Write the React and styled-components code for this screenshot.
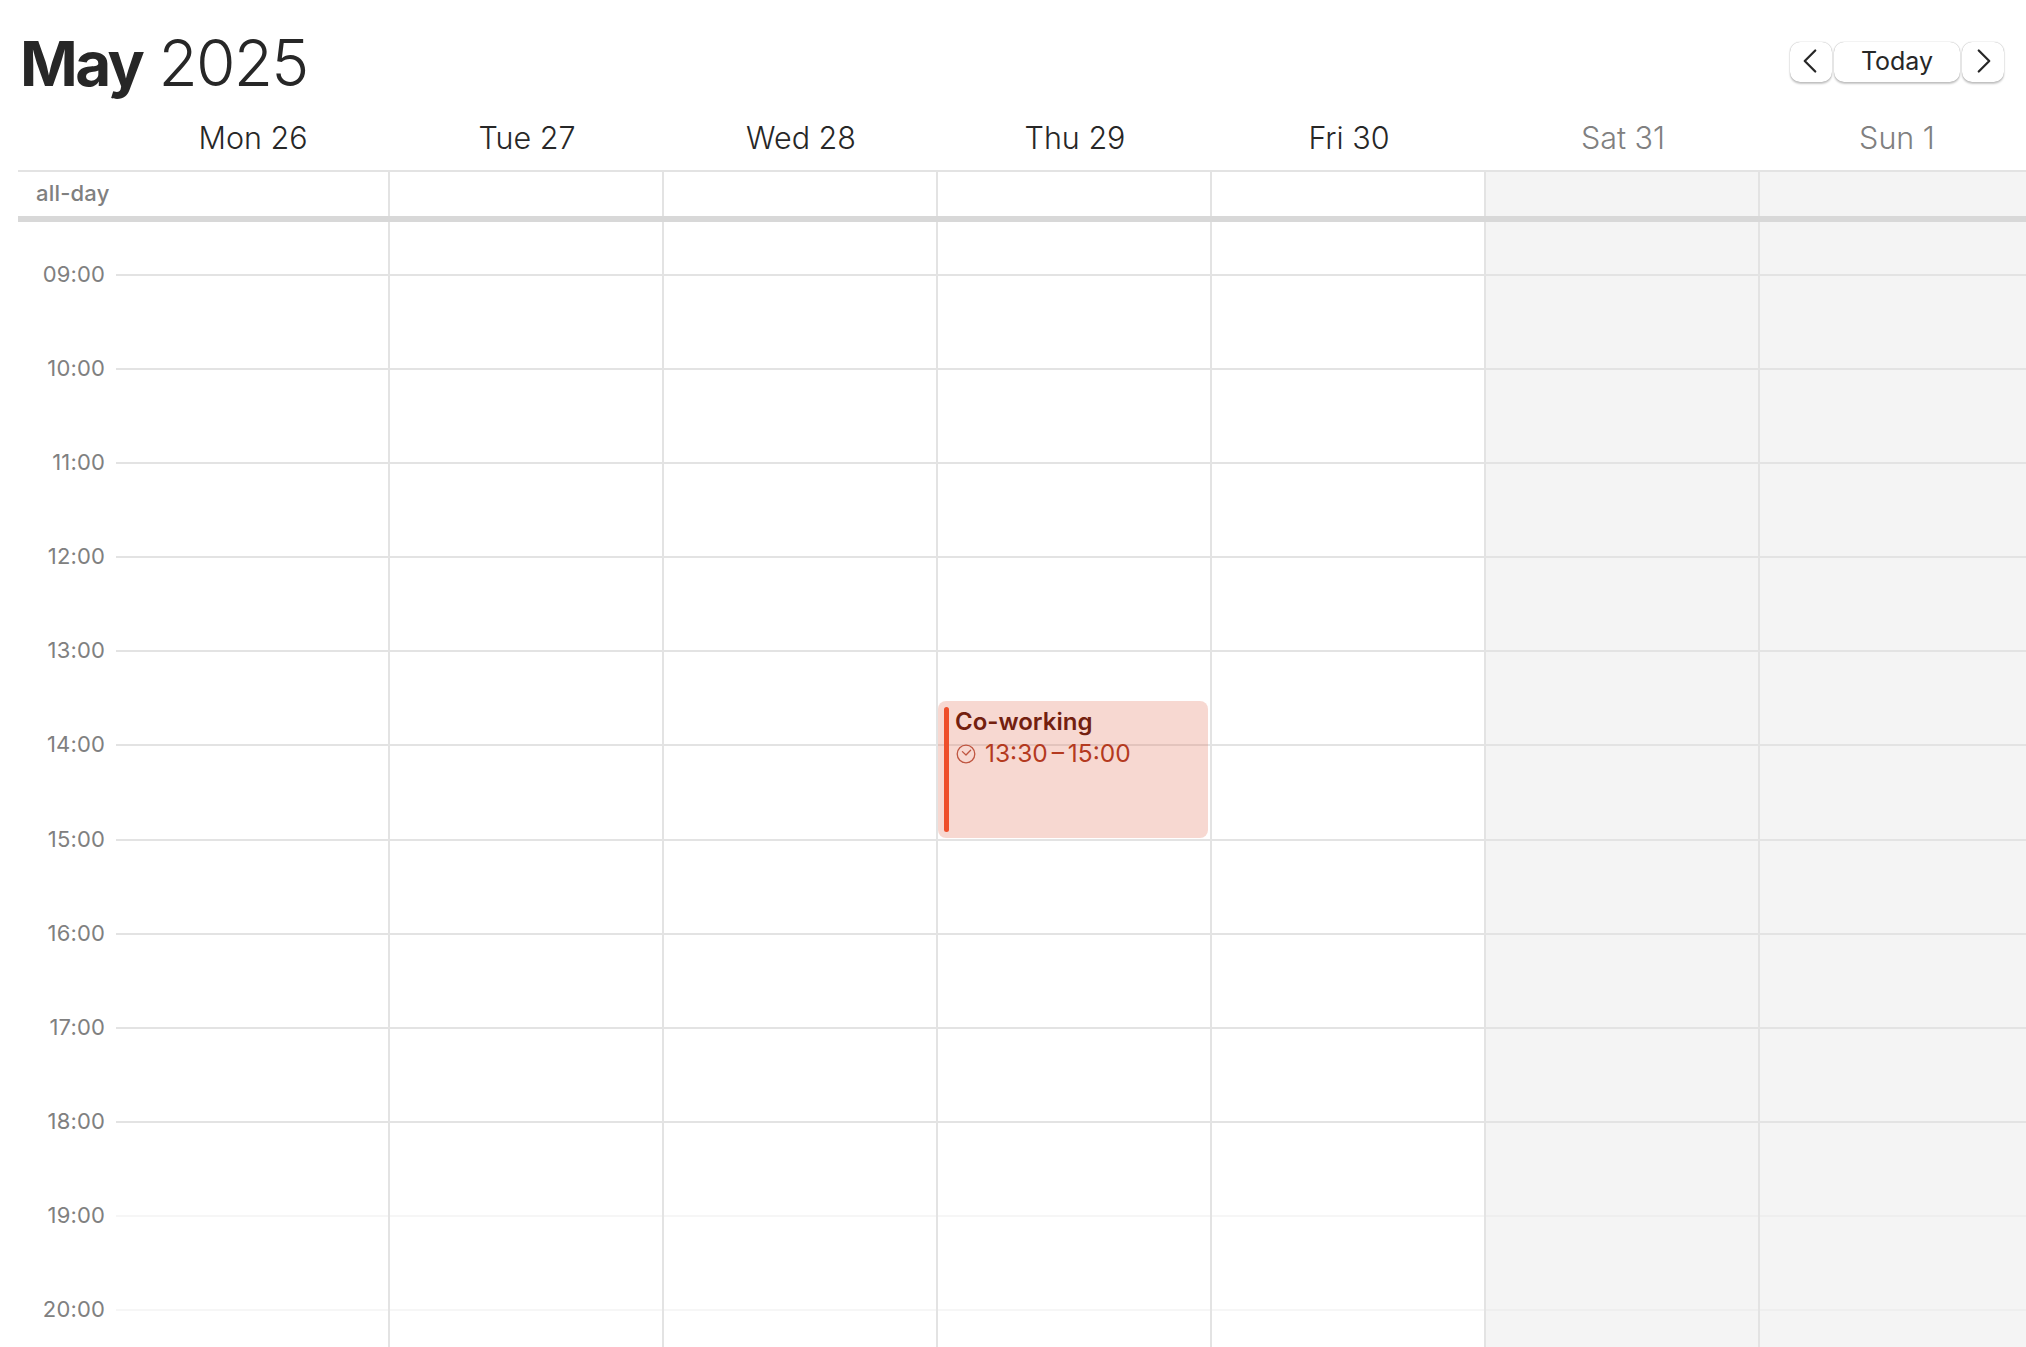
import React from 'react';
import styled, { createGlobalStyle } from 'styled-components';
import { ChevronLeft, ChevronRight } from 'lucide-react';

const DAYS = [
  { label: 'Mon 26' },
  { label: 'Tue 27' },
  { label: 'Wed 28' },
  { label: 'Thu 29', event: true },
  { label: 'Fri 30' },
  { label: 'Sat 31', weekend: true },
  { label: 'Sun 1', weekend: true },
];

const HOURS = ['09:00', '10:00', '11:00', '12:00', '13:00', '14:00', '15:00', '16:00', '17:00', '18:00', '19:00', '20:00'];

const HOUR_HEIGHT = 94.1;
const LEAD_HEIGHT = 52;
const GUTTER = 98;
const COL = 274;

const GlobalStyle = createGlobalStyle`
  html, body {
    margin: 0;
    padding: 0;
    background: #fff;
    overflow: hidden;
  }
  body {
    font-family: Inter, "Liberation Sans", sans-serif;
    color: #272727;
  }
`;

const Page = styled.div`
  width: 2026px;
  height: 1347px;
  overflow: hidden;
  padding-left: 18px;
  box-sizing: border-box;
`;

const Toolbar = styled.header`
  display: flex;
  align-items: flex-start;
  justify-content: space-between;
  height: 110px;
  padding: 24px 22px 0 2px;
  box-sizing: border-box;
`;

const Title = styled.h1`
  margin: 0;
  font-size: 64px;
  line-height: 78px;
  font-weight: 300;
  letter-spacing: -1.8px;
  b {
    font-size: 62px;
    font-weight: 700;
    letter-spacing: -2.6px;
  }
`;

const Nav = styled.div`
  display: flex;
  gap: 2px;
  margin-top: 18px;
`;

const NavButton = styled.button`
  width: ${p => (p.$wide ? '126px' : '42px')};
  height: 40px;
  padding: 0 0 2px;
  display: flex;
  align-items: center;
  justify-content: center;
  box-sizing: border-box;
  background: #fff;
  border: none;
  border-radius: 10px;
  box-shadow: 0 0 1px rgba(0, 0, 0, 0.35), 0 1.5px 2px rgba(0, 0, 0, 0.22);
  font-family: inherit;
  font-size: 25px;
  color: #272727;
`;

const PrevIcon = styled(ChevronLeft)`
  flex: none;
  margin-right: 3px;
`;

const NextIcon = styled(ChevronRight)`
  flex: none;
  margin-left: 1px;
`;

const HeadRow = styled.div`
  display: flex;
  height: 60px;
  width: max-content;
  border-bottom: 2px solid #e3e3e3;
  padding-left: ${GUTTER}px;
`;

const HeadCell = styled.div`
  width: ${COL}px;
  height: 60px;
  line-height: 56px;
  text-align: center;
  font-size: 30.5px;
  font-weight: 300;
  color: ${p => (p.$weekend ? '#808080' : '#272727')};
`;

const AllDayRow = styled.div`
  display: flex;
  height: 44px;
  width: max-content;
`;

const AllDayLabel = styled.div`
  width: ${GUTTER}px;
  padding-left: 18px;
  box-sizing: border-box;
  font-size: 22px;
  font-weight: 500;
  line-height: 43px;
  letter-spacing: 0.2px;
  color: #808080;
`;

const AllDayCell = styled.div`
  width: ${COL}px;
  box-sizing: border-box;
  border-right: 2px solid #e3e3e3;
  background: ${p => (p.$weekend ? '#f4f4f4' : '#fff')};
`;

const Divider = styled.div`
  height: 6px;
  width: 2100px;
  background: #d8d8d8;
`;

const Grid = styled.div`
  display: flex;
  width: max-content;
`;

const Gutter = styled.div`
  width: ${GUTTER}px;
  padding-top: ${LEAD_HEIGHT}px;
`;

const TimeRow = styled.div`
  height: ${HOUR_HEIGHT}px;
  display: flex;
  align-items: flex-start;
`;

const TimeLabel = styled.span`
  width: 87px;
  text-align: right;
  font-size: 22px;
  line-height: 22px;
  letter-spacing: 0.15px;
  color: #808080;
  transform: translateY(-11px);
`;

const TimeTick = styled.span`
  flex: 1;
  height: 2px;
  margin-left: 11px;
  background: ${p => (p.$faded ? '#f6f6f6' : '#e3e3e3')};
`;

const DayColumn = styled.div`
  position: relative;
  width: ${COL}px;
  box-sizing: border-box;
  padding-top: ${LEAD_HEIGHT}px;
  border-right: 2px solid #e3e3e3;
  background: ${p => (p.$weekend ? '#f4f4f4' : '#fff')};
`;

const HourCell = styled.div`
  height: ${HOUR_HEIGHT}px;
  box-sizing: border-box;
  border-top: 2px solid ${p => {
    if (!p.$faded) return '#e3e3e3';
    return p.$weekend ? '#eeeeee' : '#f6f6f6';
  }};
`;

const Event = styled.div`
  position: absolute;
  top: 479px;
  left: 0;
  width: 270px;
  height: 137px;
  padding: 6px;
  box-sizing: border-box;
  display: flex;
  gap: 6px;
  border-radius: 8px;
  background: rgba(227, 121, 97, 0.29);
`;

const EventBar = styled.div`
  width: 5px;
  flex: none;
  border-radius: 3px;
  background: #ee4f2b;
`;

const EventBody = styled.div`
  display: flex;
  flex-direction: column;
`;

const EventTitle = styled.div`
  font-size: 24px;
  line-height: 30px;
  font-weight: 600;
  color: #73200f;
`;

const EventTime = styled.div`
  display: flex;
  align-items: center;
  gap: 9px;
  font-size: 24.5px;
  line-height: 33px;
  word-spacing: -3px;
  color: #b43a20;
  padding-left: 1px;
`;

const ClockIcon = () => (
  <svg width="20" height="20" viewBox="0 0 20 20" fill="none" stroke="#bf5540" strokeWidth="1.3" strokeLinecap="round" strokeLinejoin="round">
    <circle cx="10" cy="10" r="8.8" />
    <path d="M6.4 7.6 L10 11 L14.6 6.2" />
  </svg>
);

export default function App() {
  return (
    <Page>
      <GlobalStyle />
      <Toolbar>
        <Title><b>May</b> 2025</Title>
        <Nav>
          <NavButton><PrevIcon size={42} strokeWidth={1.3} /></NavButton>
          <NavButton $wide>Today</NavButton>
          <NavButton><NextIcon size={42} strokeWidth={1.3} /></NavButton>
        </Nav>
      </Toolbar>
      <HeadRow>
        {DAYS.map(d => <HeadCell key={d.label} $weekend={d.weekend}>{d.label}</HeadCell>)}
      </HeadRow>
      <AllDayRow>
        <AllDayLabel>all-day</AllDayLabel>
        {DAYS.map(d => <AllDayCell key={d.label} $weekend={d.weekend} />)}
      </AllDayRow>
      <Divider />
      <Grid>
        <Gutter>
          {HOURS.map((h, i) => (
            <TimeRow key={h}>
              <TimeLabel>{h}</TimeLabel>
              <TimeTick $faded={i >= 10} />
            </TimeRow>
          ))}
        </Gutter>
        {DAYS.map(d => (
          <DayColumn key={d.label} $weekend={d.weekend}>
            {HOURS.map((h, i) => <HourCell key={h} $faded={i >= 10} $weekend={d.weekend} />)}
            {d.event && (
              <Event>
                <EventBar />
                <EventBody>
                  <EventTitle>Co-working</EventTitle>
                  <EventTime><ClockIcon />13:30 – 15:00</EventTime>
                </EventBody>
              </Event>
            )}
          </DayColumn>
        ))}
      </Grid>
    </Page>
  );
}
